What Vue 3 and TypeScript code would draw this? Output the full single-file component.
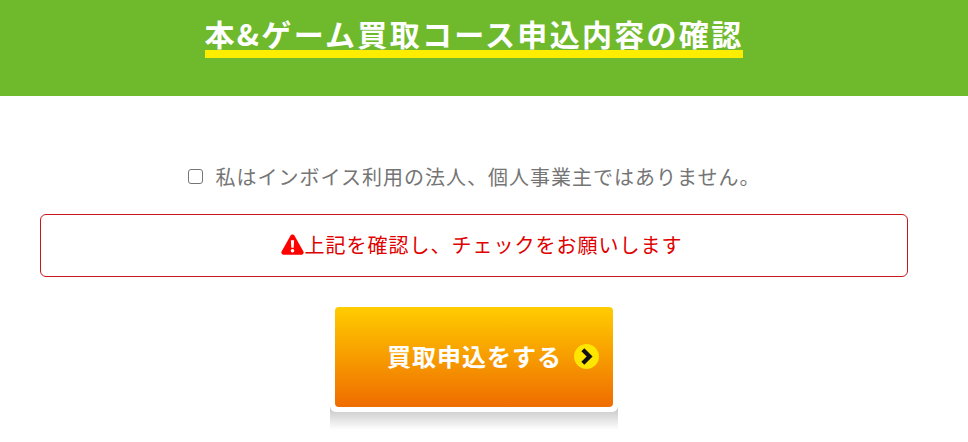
<script setup lang="ts">
const title = '本&ゲーム買取コース申込内容の確認'
const agreement = '私はインボイス利用の法人、個人事業主ではありません。'
const warning = '上記を確認し、チェックをお願いします'
</script>

<template>
  <div class="page">
    <header class="hero">
      <h1 class="title"><span class="mark">{{ title }}</span></h1>
    </header>
    <main class="body">
      <label class="agree">
        <input type="checkbox" class="check" />
        <span>{{ agreement }}</span>
      </label>
      <div class="alert">
        <svg class="warn" viewBox="0 0 24 22" aria-hidden="true">
          <path fill="#ff0000" d="M12 .5c.9 0 1.600.5 2 1.200l9.400 16.600c.9 1.600-.2 3.400-2 3.400H2.600c-1.800 0-2.900-1.800-2-3.400L10 1.700c.4-.7 1.100-1.200 2-1.200z" />
          <path fill="#fff" d="M10.300 6.500h3.400l-.5 8h-2.400zM12 15.600a1.900 1.900 0 1 1 0 3.800 1.900 1.900 0 0 1 0-3.800z" />
        </svg>
        <span>{{ warning }}</span>
      </div>
      <div class="cta-wrap">
        <button type="button" class="cta">
          <span class="cta-label">買取申込をする</span>
          <svg class="arrow" viewBox="0 0 24 24" aria-hidden="true">
            <circle cx="12" cy="12" r="12" fill="#ffe600" />
            <path d="M8.500 5.500 15 12l-6.500 6.500" fill="none" stroke="#111" stroke-width="4" />
          </svg>
        </button>
      </div>
    </main>
  </div>
</template>

<style>
html, body { margin: 0; background: #fff; overflow: hidden; }
</style>

<style scoped>
.page {
  isolation: isolate;
  width: 968px;
  height: 442px;
  font-family: "Noto Sans CJK JP", "Noto Sans", sans-serif;
  overflow: hidden;
}
.hero {
  height: 96px;
  background: #6fba2c;
  padding: 9px 20px 0 0;
  box-sizing: border-box;
  text-align: center;
}
.title {
  margin: 0;
  color: #fff;
  font-size: 30px;
  font-weight: 700;
  letter-spacing: 2.3px;
  line-height: 48px;
}
.mark {
  display: inline-block;
  line-height: 46px;
  padding-bottom: 2px;
  background: linear-gradient(transparent 40px, #ffed00 40px, #ffed00 48px, transparent 48px);
}
.body {
  width: 868px;
  margin-left: 40px;
  display: flex;
  flex-direction: column;
  align-items: center;
  padding-top: 65px;
}
.agree {
  display: flex;
  align-items: center;
  height: 30px;
  color: #757575;
  font-size: 20px;
  letter-spacing: 1px;
}
.check {
  width: 15px;
  height: 15px;
  margin: 0 13px 0 0;
  appearance: none;
  border: 1.500px solid #757575;
  border-radius: 3px;
  background: #fff;
  box-sizing: border-box;
}
.alert {
  width: 100%;
  height: 63px;
  margin-top: 23px;
  box-sizing: border-box;
  border: 1px solid #c8161d;
  border-radius: 6px;
  display: flex;
  align-items: center;
  justify-content: center;
  padding: 0 0 2px 15px;
  color: #e00000;
  font-size: 20px;
  letter-spacing: 1px;
}
.warn {
  width: 23px;
  height: 21px;
  margin-right: 1px;
}
.cta-wrap {
  position: relative;
  margin-top: 30px;
  padding: 0 5px 5px;
  width: 278px;
  border-radius: 0 0 6px 6px;
  background: #fff;
}
.cta-wrap::after {
  content: "";
  position: absolute;
  z-index: -1;
  left: 0;
  right: 0;
  top: calc(100% - 8px);
  height: 26px;
  background: linear-gradient(#bdbdbd, #ffffff);
}
.cta {
  width: 278px;
  height: 100px;
  border: 0;
  border-radius: 4px;
  padding: 0 14px 2px 0;
  margin: 0;
  display: flex;
  align-items: center;
  justify-content: flex-end;
  gap: 12px;
  background: linear-gradient(#ffcc00, #ef6c00);
  color: #fff;
  font-family: inherit;
  font-size: 24px;
  font-weight: 700;
  letter-spacing: 1px;
}
.cta-label {
  padding-bottom: 2px;
}
.arrow {
  width: 25px;
  height: 25px;
}
</style>
